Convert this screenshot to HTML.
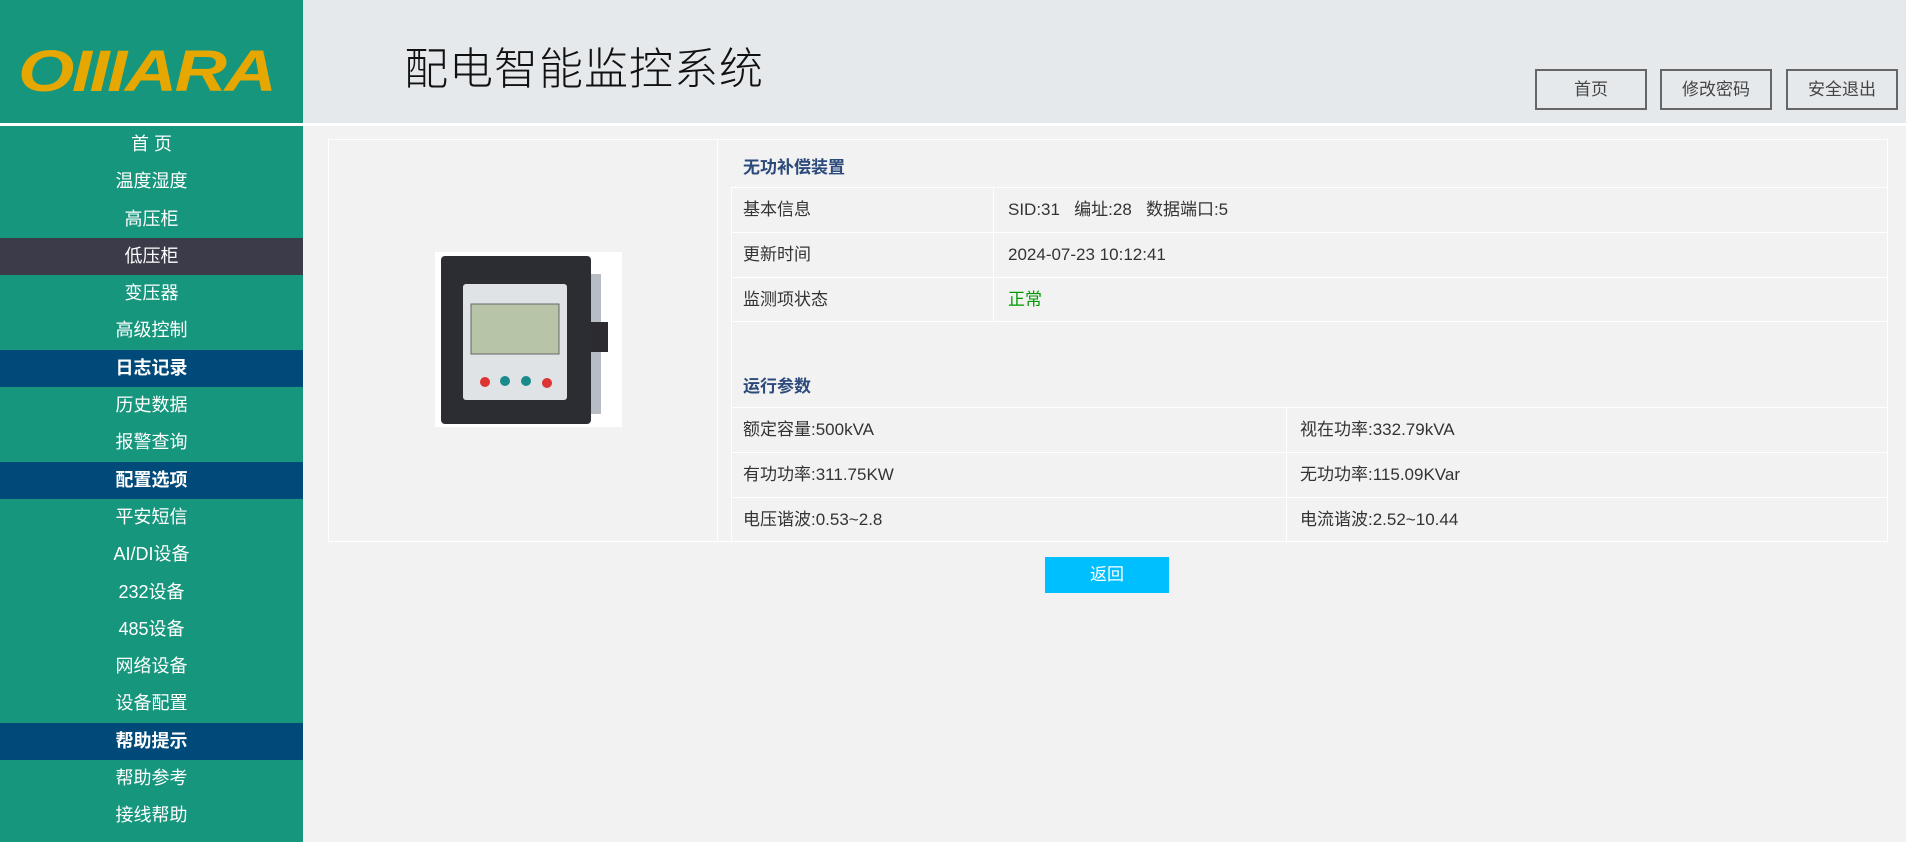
<!DOCTYPE html>
<html><head><meta charset="utf-8"><style>
*{margin:0;padding:0;box-sizing:border-box}
body{width:1906px;height:842px;overflow:hidden;background:#f2f2f2;font-family:"Liberation Sans","Noto Sans CJK SC",sans-serif;color:#333;position:relative}
.side{position:absolute;left:0;top:0;width:303px;height:842px;background:#16967c}
.logo{position:absolute;left:18px;top:42px;height:60px;color:#e5a700;font:italic bold 58px/60px "Liberation Sans",sans-serif;letter-spacing:-2px;transform:scaleX(1.25);transform-origin:left}
.sline{position:absolute;left:0;top:123px;width:1906px;height:3px;background:#fff}
.menu{position:absolute;left:0;top:126px;width:303px}
.menu div{height:37.3px;line-height:37px;text-align:center;color:#fff;font-size:18px}
.menu .act{background:#3c3b4a}
.menu .hd{background:#004a7a;font-weight:bold}
.head{position:absolute;left:303px;top:0;width:1603px;height:123px;background:#e6e9ec}
.title{position:absolute;left:404px;top:33px;font-size:44px;color:#111;font-weight:300;letter-spacing:1px}
.btn{position:absolute;top:69px;width:112px;height:41px;border:2px solid #666;text-align:center;line-height:37px;font-size:17px;color:#444}
.box{position:absolute;left:328px;top:139px;width:1560px;height:403px;border:1px solid #fff}
.lc{position:absolute;left:717px;top:139px;width:1px;height:403px;background:#fff}
.img{position:absolute;left:435px;top:252px;width:187px;height:175px;background:#fff}
.h{position:absolute;left:743px;font-size:17px;font-weight:bold;color:#2c4a7c}
.row{position:absolute;left:731px;width:1157px;height:45px;border-top:1px solid #fff;font-size:17px;line-height:44px}
.row span{position:absolute}
.vd{position:absolute;width:1px;background:#fff}
.back{position:absolute;left:1045px;top:557px;width:124px;height:36px;background:#00bfff;color:#fff;text-align:center;line-height:36px;font-size:17px}
</style></head><body>
<div class="side"></div>
<div class="head"></div>
<div class="logo">OIIIARA</div>
<div class="title">配电智能监控系统</div>
<div class="btn" style="left:1535px">首页</div>
<div class="btn" style="left:1660px">修改密码</div>
<div class="btn" style="left:1786px">安全退出</div>
<div class="sline"></div>
<div class="menu">
<div>首 页</div><div>温度湿度</div><div>高压柜</div><div class="act">低压柜</div><div>变压器</div><div>高级控制</div><div class="hd">日志记录</div><div>历史数据</div><div>报警查询</div><div class="hd">配置选项</div><div>平安短信</div><div>AI/DI设备</div><div>232设备</div><div>485设备</div><div>网络设备</div><div>设备配置</div><div class="hd">帮助提示</div><div>帮助参考</div><div>接线帮助</div>
</div>
<div class="box"></div>
<div class="lc"></div>
<div class="img">
<svg width="187" height="175" viewBox="0 0 187 175">
<rect x="152" y="22" width="14" height="140" fill="#b8bcc4"/>
<rect x="155" y="70" width="18" height="30" fill="#2b2b30"/>
<rect x="6" y="4" width="150" height="168" rx="4" fill="#2c2d33"/>
<rect x="28" y="32" width="104" height="116" rx="3" fill="#dfe3e6"/>
<rect x="36" y="52" width="88" height="50" fill="#b7c4a8" stroke="#666"/>
<circle cx="50" cy="130" r="5" fill="#d33"/><circle cx="70" cy="129" r="5" fill="#1a8a8a"/><circle cx="91" cy="129" r="5" fill="#1a8a8a"/><circle cx="112" cy="131" r="5" fill="#d33"/>
</svg></div>
<div class="h" style="top:153px">无功补偿装置</div>
<div class="row" style="top:187px"><span style="left:12px">基本信息</span><span style="left:277px">SID:31&nbsp;&nbsp;&nbsp;编址:28&nbsp;&nbsp;&nbsp;数据端口:5</span></div>
<div class="row" style="top:232px"><span style="left:12px">更新时间</span><span style="left:277px">2024-07-23 10:12:41</span></div>
<div class="row" style="top:277px;border-bottom:1px solid #fff"><span style="left:12px">监测项状态</span><span style="left:277px;color:#090">正常</span></div>
<div class="vd" style="left:993px;top:187px;height:135px"></div>
<div class="h" style="top:372px">运行参数</div>
<div class="row" style="top:407px"><span style="left:12px">额定容量:500kVA</span><span style="left:569px">视在功率:332.79kVA</span></div>
<div class="row" style="top:452px"><span style="left:12px">有功功率:311.75KW</span><span style="left:569px">无功功率:115.09KVar</span></div>
<div class="row" style="top:497px"><span style="left:12px">电压谐波:0.53~2.8</span><span style="left:569px">电流谐波:2.52~10.44</span></div>
<div class="vd" style="left:1286px;top:407px;height:135px"></div>
<div class="vd" style="left:731px;top:187px;height:355px"></div>
<div class="back">返回</div>
</body></html>
